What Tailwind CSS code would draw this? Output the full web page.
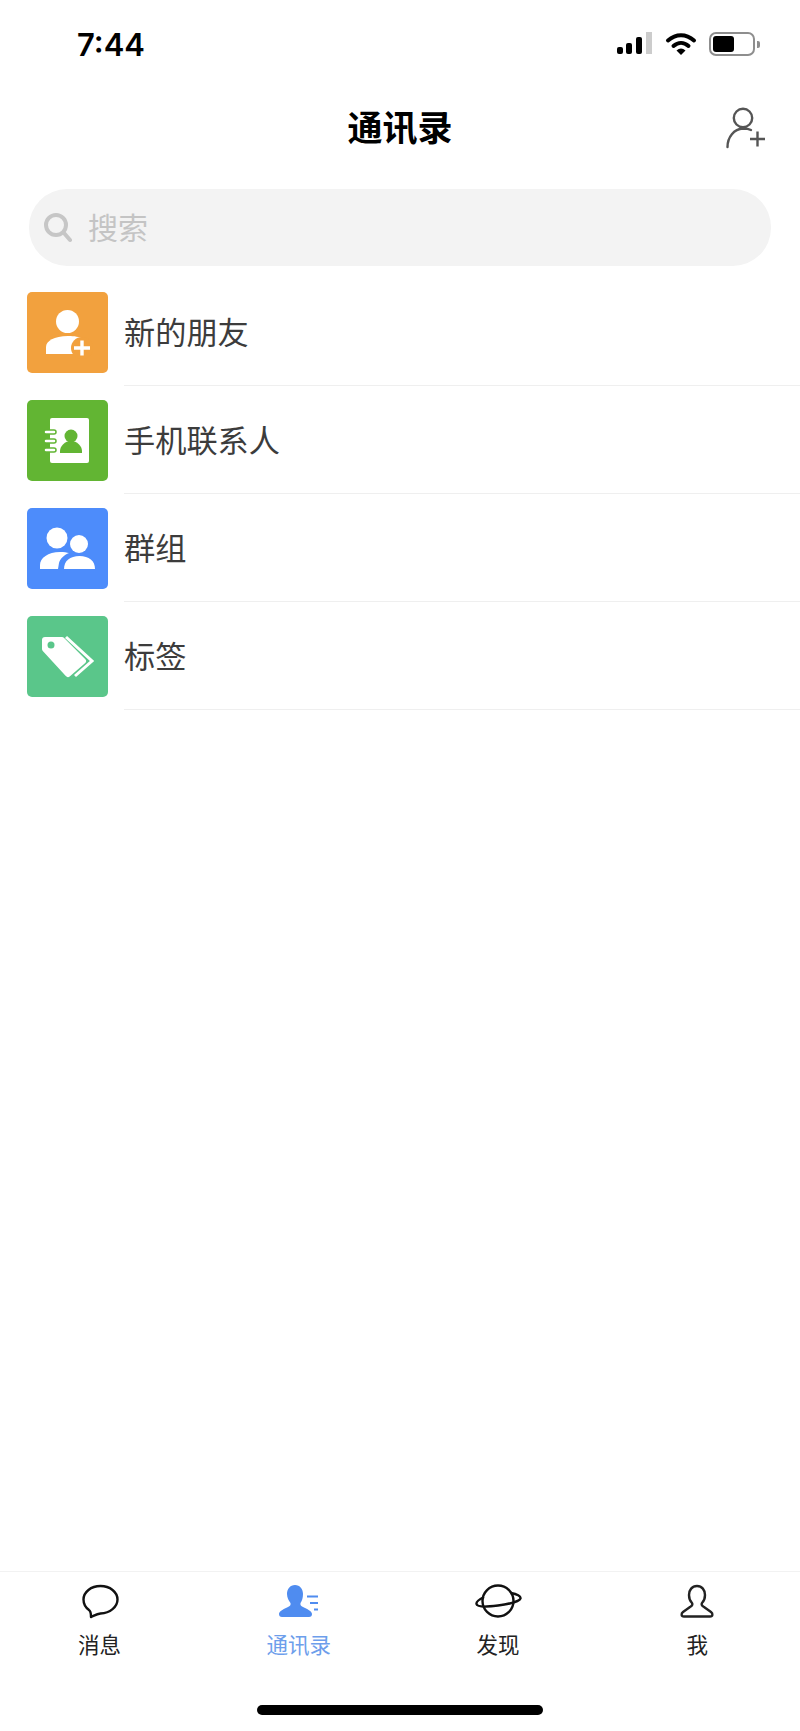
<!DOCTYPE html>
<html lang="zh-CN">
<head>
    <meta charset="UTF-8">
    <meta name="viewport" content="width=device-width, initial-scale=1.0">
    <title>通讯录</title>
    <script src="https://cdn.jsdelivr.net/npm/@tailwindcss/browser@4"></script>
</head>
<body class="bg-white">
    <div class="w-[800px] h-[1731px] flex flex-col overflow-hidden bg-white font-['Noto_Sans_CJK_SC','Noto_Sans',sans-serif]">
        <!-- status bar -->
        <div class="h-[88px] shrink-0 flex items-center justify-between pl-[77px] pr-[40px]">
            <span class="text-[31px] font-semibold leading-none text-black font-['Inter',sans-serif]">7:44</span>
            <div class="flex items-center">
                <svg width="36" height="24" viewBox="0 0 36 24" class="mr-[13px]">
                    <rect x="1" y="15" width="6" height="7" rx="2" fill="#000"/>
                    <rect x="10" y="11" width="6" height="11" rx="2" fill="#000"/>
                    <rect x="20" y="5" width="6" height="17" rx="2" fill="#000"/>
                    <rect x="30" y="0" width="6" height="22" fill="#ccc"/>
                </svg>
                <svg width="32" height="24" viewBox="0 0 32 24" class="mr-[12px]">
                    <path d="M3 8.500C11 1.500 21 1.500 29 8.500" fill="none" stroke="#000" stroke-width="4" stroke-linecap="round"/>
                    <path d="M8.500 14C13 10 19 10 23.500 14" fill="none" stroke="#000" stroke-width="4" stroke-linecap="round"/>
                    <path d="M11.500 18.500Q16 14.500 20.500 18.500L16 23Z" fill="#000"/>
                </svg>
                <div class="w-[46px] h-[24px] rounded-[7px] border-2 border-[#8e8e8e] p-[2px]">
                    <div class="w-[21px] h-full rounded-[3px] bg-black"></div>
                </div>
                <div class="w-[3px] h-[7px] rounded-r-[2px] bg-[#8e8e8e] ml-[2px]"></div>
            </div>
        </div>

        <!-- header -->
        <div class="h-[80px] shrink-0 grid grid-cols-[1fr_auto_1fr] items-center">
            <div></div>
            <h1 class="text-[35px] font-bold leading-none text-black pb-[6px]">通讯录</h1>
            <div class="justify-self-end pr-[34px]">
                <svg width="40" height="42" viewBox="0 0 40 42" fill="none" stroke="#555" stroke-width="2.400">
                    <circle cx="17" cy="11" r="9.200"/>
                    <path d="M1.500 40C1.500 30 8 22 17 21.500C20 21.500 23 22 25 23" stroke-linecap="round"/>
                    <path d="M24 32H39M31.500 24.500V39.500"/>
                </svg>
            </div>
        </div>

        <!-- search -->
        <div class="shrink-0 mx-[29px] mt-[21px] h-[77px] rounded-[38px] bg-[#f3f3f3] flex items-center pl-[15px]">
            <svg width="28" height="30" viewBox="0 0 28 30" fill="none" stroke="#c6c6c6" stroke-width="4" class="mr-[16px]">
                <circle cx="12" cy="12" r="10"/>
                <path d="M20 20L26 27" stroke-linecap="round"/>
            </svg>
            <span class="text-[30px] leading-none text-[#c4c4c4] pb-[4px]">搜索</span>
        </div>

        <!-- list -->
        <div class="mt-[13px] shrink-0">
            <div class="flex h-[108px] pl-[27px]">
                <div class="w-[81px] h-[81px] mt-[13px] shrink-0 rounded-[5px] bg-[#f2a13e]">
                    <svg width="81" height="81" viewBox="0 0 81 81">
                        <circle cx="40.500" cy="29.500" r="11.500" fill="#fff"/>
                        <path d="M19 62V55C19 49 27 44 41 44C48 44 52 45 55 46L50 62Z" fill="#fff"/>
                        <circle cx="55" cy="56" r="11" fill="#f2a13e"/>
                        <path d="M47 56H63M55 48.500V63.500" stroke="#fff" stroke-width="3.400"/>
                    </svg>
                </div>
                <div class="flex-1 ml-[16px] flex items-start border-b border-[#efefef] h-[107px]">
                    <span class="mt-[34px] text-[31.200px] leading-[36px] text-[#3c3c3c]">新的朋友</span>
                </div>
            </div>
            <div class="flex h-[108px] pl-[27px]">
                <div class="w-[81px] h-[81px] mt-[13px] shrink-0 rounded-[5px] bg-[#62b533]">
                    <svg width="81" height="81" viewBox="0 0 81 81">
                        <rect x="23" y="18" width="39" height="45" rx="2" fill="#fff"/>
                        <path d="M19 32H27M19 41H27M19 50H27" stroke="#62b533" stroke-width="5.500" stroke-linecap="round"/>
                        <path d="M19 32H27M19 41H27M19 50H27" stroke="#fff" stroke-width="2.500" stroke-linecap="round"/>
                        <circle cx="44" cy="36" r="6.500" fill="#62b533"/>
                        <path d="M33 53V51C33 46 38 41 44 41C50 41 55 46 55 51V53Z" fill="#62b533"/>
                    </svg>
                </div>
                <div class="flex-1 ml-[16px] flex items-start border-b border-[#efefef] h-[107px]">
                    <span class="mt-[34px] text-[31.200px] leading-[36px] text-[#3c3c3c]">手机联系人</span>
                </div>
            </div>
            <div class="flex h-[108px] pl-[27px]">
                <div class="w-[81px] h-[81px] mt-[13px] shrink-0 rounded-[5px] bg-[#4d8cfb]">
                    <svg width="81" height="81" viewBox="0 0 81 81">
                        <circle cx="30" cy="30" r="10.500" fill="#fff"/>
                        <path d="M13 61V57C13 50 21 44 33 44C37 44 40 44.500 42 45C37 47 33 51 32 55L31 61Z" fill="#fff"/>
                        <circle cx="52" cy="36" r="9" fill="#fff"/>
                        <path d="M37 61C37 53 43 48 52.500 48C62 48 68 53 68 61Z" fill="#fff"/>
                    </svg>
                </div>
                <div class="flex-1 ml-[16px] flex items-start border-b border-[#efefef] h-[107px]">
                    <span class="mt-[34px] text-[31.200px] leading-[36px] text-[#3c3c3c]">群组</span>
                </div>
            </div>
            <div class="flex h-[108px] pl-[27px]">
                <div class="w-[81px] h-[81px] mt-[13px] shrink-0 rounded-[5px] bg-[#5ac68a]">
                    <svg width="81" height="81" viewBox="0 0 81 81">
                        <path d="M18 24H35L56 45L41 58L18 33Z" fill="#fff" stroke="#fff" stroke-width="6" stroke-linejoin="round"/>
                        <circle cx="24" cy="29" r="3.500" fill="#5ac68a"/>
                        <path d="M39 21L65 45L48 60" fill="none" stroke="#fff" stroke-width="3"/>
                    </svg>
                </div>
                <div class="flex-1 ml-[16px] flex items-start border-b border-[#efefef] h-[107px]">
                    <span class="mt-[34px] text-[31.200px] leading-[36px] text-[#3c3c3c]">标签</span>
                </div>
            </div>
        </div>

        <div class="flex-1"></div>

        <!-- tab bar -->
        <div class="h-[160px] shrink-0 border-t border-[#f2f2f2] flex flex-col">
            <div class="grid grid-cols-4 pr-[3px] pt-[11px]">
                <div class="flex flex-col items-center">
                    <svg width="48" height="38" viewBox="0 0 48 38" fill="none" stroke="#111" stroke-width="2.400" stroke-linejoin="round">
                        <path d="M24.500 3C15 3 7.500 9 7.500 16.500C7.500 21 9.500 24.500 13 27C14.500 28 15 30.500 15 34C18 33 20 31 24.500 30.500C34 30 41.500 24 41.500 16.500C41.500 9 34 3 24.500 3Z"/>
                    </svg>
                    <span class="mt-[9px] text-[21.500px] leading-[28px] text-[#222]">消息</span>
                </div>
                <div class="flex flex-col items-center">
                    <svg width="48" height="38" viewBox="0 0 48 38" fill="#4f8cf0">
                        <path d="M20 2C15 2 12 6 12 11C12 15 14 18 15.500 20C16 22 15 23 13 24C9 26 4 28 4 31C4 33 5 34 7 34H34C36 34 37 33 37 31C37 28 32 26 28 24C26 23 25 22 25.500 20C27 18 28 15 28 11C28 6 25 2 20 2Z"/>
                        <path d="M32 13.500H43M35 20H43M39 26.500H43" stroke="#4f8cf0" stroke-width="2"/>
                    </svg>
                    <span class="mt-[9px] text-[21.500px] leading-[28px] text-[#6d9eeb]">通讯录</span>
                </div>
                <div class="flex flex-col items-center">
                    <svg width="48" height="38" viewBox="0 0 48 38" fill="none" stroke="#111" stroke-width="2.400">
                        <circle cx="24" cy="18" r="15.500"/>
                        <path d="M37 10C43 11 47 13 46.500 15.500C46 18 36 21 24 22.500C12 24 3 24 2.500 21C2 19 5 16.500 10 14"/>
                    </svg>
                    <span class="mt-[9px] text-[21.500px] leading-[28px] text-[#222]">发现</span>
                </div>
                <div class="flex flex-col items-center">
                    <svg width="48" height="38" viewBox="0 0 48 38" fill="none" stroke="#222" stroke-width="2.400" stroke-linejoin="round">
                        <path d="M24 3C19 3 16 7 16 12C16 15 17 18 19 20C20 21.500 19 23 17 24L10 29C8 30.500 8 33.500 11 33.500H37C40 33.500 40 30.500 38 29L31 24C29 23 28 21.500 29 20C31 18 32 15 32 12C32 7 29 3 24 3Z"/>
                    </svg>
                    <span class="mt-[9px] text-[21.500px] leading-[28px] text-[#222]">我</span>
                </div>
            </div>
            <div class="mt-auto mb-[16px] mx-auto w-[286px] h-[10px] rounded-full bg-black"></div>
        </div>
    </div>
</body>
</html>
